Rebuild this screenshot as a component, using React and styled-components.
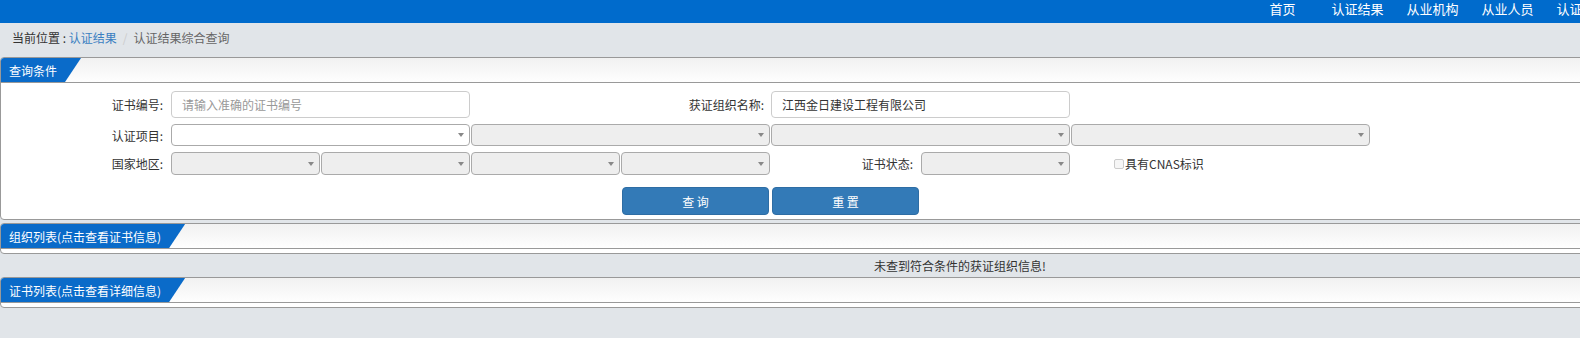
import React from 'react';
import styled, { createGlobalStyle } from 'styled-components';

const GlobalStyle = createGlobalStyle`
  html, body {
    margin: 0;
    padding: 0;
    overflow: hidden;
    background: #e1e5e9;
  }
  body {
    font-family: "Noto Sans CJK SC", "Noto Sans", "Liberation Sans", sans-serif;
    font-size: 12px;
    color: #333;
  }
  * { box-sizing: border-box; }
`;

const Page = styled.div`
  width: 1920px;
`;

const TopNav = styled.nav`
  height: 23px;
  background: #006bcc;
  display: flex;
  justify-content: flex-end;
  padding-right: 225px;
`;

const NavItem = styled.a`
  width: 75px;
  text-align: center;
  color: #fff;
  font-size: 13px;
  line-height: 17px;
  text-decoration: none;
`;

const Crumbs = styled.div`
  height: 34px;
  padding: 6px 0 0 12px;
  line-height: 17px;
  font-size: 12px;
  color: #333;
  span.link { color: #3a7fc1; }
  span.sep { color: #ccc; padding: 0 6px; }
  span.active { color: #666; }
`;

const Panel = styled.section`
  background: #fff;
  border: 1px solid #999;
  border-radius: 4px;
  overflow: hidden;
  margin-bottom: ${p => p.$gap || 0}px;
`;

const PanelHead = styled.div`
  height: 25px;
  border-bottom: 1px solid #999;
  background: linear-gradient(#f1f1f1, #fefefe);
  display: flex;
`;

const Tab = styled.h3`
  margin: 0;
  background: #0a6bc9;
  color: #fff;
  font-size: 12px;
  font-weight: normal;
  line-height: 24px;
  padding: 1px 24px 0 8px;
  clip-path: polygon(0 0, 100% 0, calc(100% - 16px) 100%, 0 100%);
`;

const PanelBody = styled.div`
  padding: ${p => p.$pad || '4px 0 0'};
`;

const Row = styled.div`
  display: grid;
  grid-template-columns: 170px repeat(8, 150px);
  height: ${p => p.$h}px;
  margin-top: ${p => p.$mt || 0}px;
`;

const Label = styled.label`
  grid-column: span ${p => p.$span || 1};
  display: flex;
  align-items: center;
  justify-content: flex-end;
  padding-right: ${p => p.$pr || 8}px;
  color: #333;
  font-size: 12px;
`;

const TextInput = styled.input`
  grid-column: span 2;
  margin-right: 1px;
  height: 100%;
  border: 1px solid #ccc;
  border-radius: 4px;
  padding: 0 10px;
  font-family: inherit;
  font-size: 12px;
  color: #333;
  outline: none;
  &::placeholder { color: #999; }
`;

const SelectBox = styled.div`
  grid-column: span ${p => p.$span || 1};
  margin-right: 1px;
  height: 100%;
  border: 1px solid #aaa;
  border-radius: 4px;
  background: ${p => (p.$enabled ? '#fff' : '#eee')};
  display: flex;
  align-items: center;
  justify-content: flex-end;
  padding-right: 5px;
`;

const Caret = styled.span`
  width: 0;
  height: 0;
  border-left: 3px solid transparent;
  border-right: 3px solid transparent;
  border-top: 4px solid #888;
`;

const CheckCell = styled.div`
  display: flex;
  align-items: center;
  padding-left: 43px;
  white-space: nowrap;
  font-size: 12px;
  color: #333;
`;

const Box = styled.span`
  width: 10px;
  height: 10px;
  border: 1px solid #ccc;
  border-radius: 2px;
  background: #f6f6f6;
  margin-right: 1px;
`;

const Button = styled.button`
  grid-column: ${p => p.$col};
  width: 147px;
  height: 28px;
  margin-left: 1px;
  background: #337ab7;
  border: 1px solid #2e6da4;
  border-radius: 4px;
  color: #fff;
  font-family: inherit;
  font-size: 12px;
  cursor: pointer;
`;

const Message = styled.div`
  height: 23px;
  line-height: 23px;
  text-align: center;
  font-size: 12px;
  color: #333;
`;

const Select = ({ span, enabled }) => (
  <SelectBox $span={span} $enabled={enabled}>
    <Caret />
  </SelectBox>
);

const navItems = ['首页', '认证结果', '从业机构', '从业人员', '认证公告', '联系我们'];

export default function App() {
  return (
    <Page>
      <GlobalStyle />
      <TopNav>
        {navItems.map(n => <NavItem key={n}>{n}</NavItem>)}
      </TopNav>
      <Crumbs>
        当前位置 : <span className="link">认证结果</span>
        <span className="sep">/</span>
        <span className="active">认证结果综合查询</span>
      </Crumbs>

      <Panel $gap={3}>
        <PanelHead><Tab>查询条件</Tab></PanelHead>
        <PanelBody $pad="8px 0 4px">
          <Row $h={27}>
            <Label>证书编号:</Label>
            <TextInput placeholder="请输入准确的证书编号" />
            <Label $span={2} $pr={7}>获证组织名称:</Label>
            <TextInput defaultValue="江西金日建设工程有限公司" />
          </Row>
          <Row $h={22} $mt={6}>
            <Label>认证项目:</Label>
            <Select span={2} enabled />
            <Select span={2} />
            <Select span={2} />
            <Select span={2} />
          </Row>
          <Row $h={23} $mt={6}>
            <Label>国家地区:</Label>
            <Select />
            <Select />
            <Select />
            <Select />
            <Label>证书状态:</Label>
            <Select />
            <CheckCell><Box />具有CNAS标识</CheckCell>
          </Row>
          <Row $h={28} $mt={12}>
            <Button $col={5}>查 询</Button>
            <Button $col={6}>重 置</Button>
          </Row>
        </PanelBody>
      </Panel>

      <Panel>
        <PanelHead><Tab>组织列表(点击查看证书信息)</Tab></PanelHead>
        <PanelBody $pad="4px 0 0" />
      </Panel>
      <Message>未查到符合条件的获证组织信息!</Message>

      <Panel>
        <PanelHead><Tab>证书列表(点击查看详细信息)</Tab></PanelHead>
        <PanelBody $pad="4px 0 0" />
      </Panel>
    </Page>
  );
}
